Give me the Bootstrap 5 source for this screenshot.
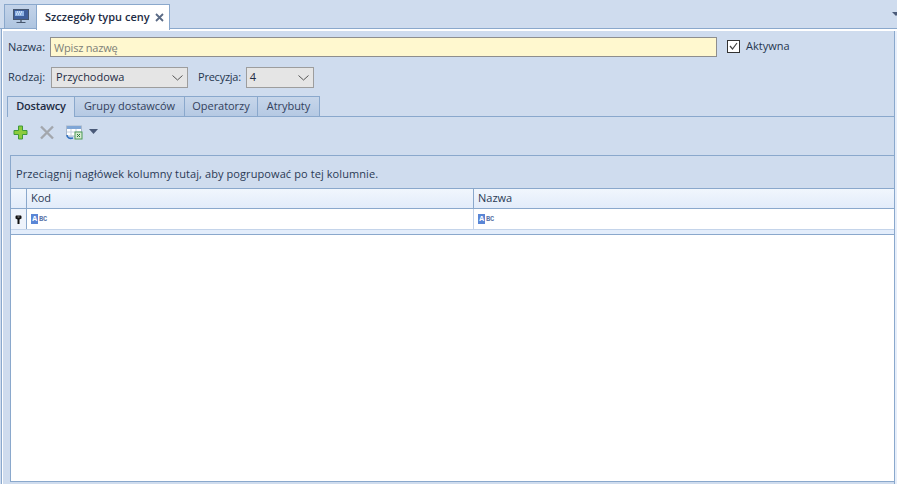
<!DOCTYPE html>
<html lang="pl"><head><meta charset="utf-8"><title>Szczegóły typu ceny</title>
<link href="https://cdn.jsdelivr.net/npm/bootstrap@5.3.0/dist/css/bootstrap.min.css" rel="stylesheet">
<style>
html,body{height:484px;overflow:hidden}
body{background:#cfdcee;font-family:"Open Sans","Noto Sans",sans-serif;font-size:11px;color:#26364f;width:897px}
.doc-strip{height:29px;padding-left:4px;border-bottom:1px solid #8aa8cc;align-items:flex-end;position:relative}
.doc-icon{width:33px;height:24px;background:linear-gradient(#c3d3e9,#afc5e0);border:1px solid #8aa8cc;border-bottom:0;justify-content:center;align-items:center;display:flex;flex:none}
.doc-active{width:134px;height:26px;background:#fff;border:1px solid #8aa8cc;border-bottom:0;margin-bottom:-2px;margin-left:-1px;padding:0 5px 0 8px;font-weight:600;font-size:11px;color:#1e2c44;position:relative;z-index:1;white-space:nowrap;flex:none}
.strip-arrow{position:absolute;right:-3px;top:12px;width:0;height:0;border-left:4px solid transparent;border-right:4px solid transparent;border-top:4px solid #4a5a78}
.frame{border-left:1px solid #8aa8cc;margin-left:1px;height:455px;position:relative;padding-left:0}
.frame-in{border-top:2px solid #fff;border-left:1px solid #fff;height:455px;padding:6px 0 0 5px}
.fld-label{color:#26364f;white-space:nowrap}
.name-input{width:667px;height:20px;border:1px solid #8e8e8e;background:#fff8cf;color:#7d7f78;font-size:11px;letter-spacing:-.2px;padding:0 3px;border-radius:0;margin-left:5px;line-height:18px}
.name-input::placeholder{color:#7d7f78;opacity:1}
.chk{width:13px;height:13px;border:1px solid #333;background:#fff;margin:0 6px 2px 10px;display:flex;align-items:center;justify-content:center}
.lbl-act{margin-bottom:2px}
.pick{height:21px;border:1px solid #9d9d9d;background:#e5e5e5;padding:0 4px;color:#1e2c44;font-size:11px;justify-content:space-between;align-items:center;display:flex}
.pick-a{width:137px;margin-left:6px}
.pick-b{width:68px;margin-left:5px;padding-left:3px}
.lbl-prec{margin-left:10px;letter-spacing:-.25px}
.row-two{margin-top:10px}
.sub-tabs{margin-top:8px;height:21px;margin-left:-1px;border-bottom:1px solid #8aa8cc;align-items:flex-end}
.sub-tab{height:20px;background:linear-gradient(#c7d6ea,#b5c9e3);border:1px solid #8aa8cc;border-bottom:0;border-left:0;padding-top:1px;text-align:center;letter-spacing:-.05px;color:#33415c}
.sub-on{height:21px;background:#cfdcee;border-left:1px solid #8aa8cc;font-weight:600;color:#1e2c44;margin-bottom:-1px;letter-spacing:-.2px;position:relative}
.tab-w1{width:68px}.tab-w2{width:110px}.tab-w3{width:73px}.tab-w4{width:62px}
.tools{height:30px;padding:1px 0 0 5px;gap:12px;align-items:center;margin-bottom:8px}
.gridbox{margin-left:2px;width:884px;border:1px solid #8aa8cc;border-right:0;border-bottom:0;height:327px;display:flex;flex-direction:column}
.group-hint{height:33px;padding:10px 0 0 5px;border-bottom:1px solid #8aa8cc;letter-spacing:.09px;color:#2a3a55}
.head-row{height:20px;background:linear-gradient(#f1f6fd,#e2ecfa);border-bottom:1px solid #8aa8cc}
.cell-ind{width:16px;border-right:1px solid #8aa8cc;flex:none}
.cell-a{width:447px;padding-left:4px;border-right:1px solid #8aa8cc;flex:none;line-height:18px;color:#2a3a55}
.cell-b{flex:1;padding-left:4px;line-height:18px;color:#2a3a55}
.data-row{height:21px;background:#fff;border-bottom:1px solid #c4d4ea}
.data-row .cell-a{border-right-color:#c4d4ea}
.data-row .cell-ind{background:#eef3fb}
.foot-strip{height:5px;background:#e3edfb;border-bottom:1px solid #8aa8cc}
.grid-body{flex:1;background:#fff;border-bottom:1px solid #8aa8cc}
.rightedge{position:absolute;left:892px;top:2px;width:3px;height:453px;background:#e6eefa;border-left:1px solid #8aa8cc}
.abc{font:700 7px/8px "Liberation Mono",monospace;color:#5a74a8;display:flex;align-items:center;height:100%;letter-spacing:-.2px}
.abc b{background:#5a86d6;color:#fff;width:7px;height:10px;line-height:10px;text-align:center;margin-right:1px;font-size:8px}
</style></head><body>
<div class="doc-strip d-flex">
  <div class="doc-icon"><svg width="16" height="15" viewBox="0 0 16 15"><rect x=".5" y=".5" width="15" height="10" fill="#3f5f9c" stroke="#46566e"/><rect x="2" y="2" width="9" height="5" fill="#8fb4e6"/><path d="M4 3h1M6 3h1M8 3h1M3 5h1M5 5h1M7 5h1" stroke="#fff"/><path d="M7 11h2v2H7z" fill="#6c7c92"/><path d="M3.500 13.500h9" stroke="#46566e"/></svg></div>
  <div class="doc-active d-flex align-items-center justify-content-between"><span>Szczegóły typu ceny</span><svg width="9" height="9" viewBox="0 0 9 9"><path d="M1 1l7 7M8 1L1 8" stroke="#5a6a85" stroke-width="1.800"/></svg></div>
  <div class="strip-arrow"></div>
</div>
<div class="frame"><div class="frame-in">
  <div class="d-flex align-items-center">
    <span class="fld-label">Nazwa:</span>
    <input class="form-control name-input" placeholder="Wpisz nazwę">
    <span class="chk"><svg width="9" height="8" viewBox="0 0 9 8"><path d="M1 4l2.500 3L8 1" fill="none" stroke="#444" stroke-width="1.200"/></svg></span>
    <span class="fld-label lbl-act">Aktywna</span>
  </div>
  <div class="d-flex align-items-center row-two">
    <span class="fld-label">Rodzaj:</span>
    <div class="pick pick-a"><span>Przychodowa</span><svg width="11" height="6" viewBox="0 0 11 6"><path d="M.5.500l5 4.500 5-4.500" fill="none" stroke="#555"/></svg></div>
    <span class="fld-label lbl-prec">Precyzja:</span>
    <div class="pick pick-b"><span>4</span><svg width="11" height="6" viewBox="0 0 11 6"><path d="M.5.500l5 4.500 5-4.500" fill="none" stroke="#555"/></svg></div>
  </div>
  <div class="sub-tabs d-flex">
    <div class="sub-tab sub-on tab-w1">Dostawcy</div>
    <div class="sub-tab tab-w2">Grupy dostawców</div>
    <div class="sub-tab tab-w3">Operatorzy</div>
    <div class="sub-tab tab-w4">Atrybuty</div>
  </div>
  <div class="tools d-flex">
    <svg width="15" height="15" viewBox="0 0 15 15"><path d="M5.500 1h4v4.500H14v4H9.500V14h-4V9.500H1v-4h4.500z" fill="#8ccc3c" stroke="#3f9a3a"/></svg>
    <svg width="14" height="15" viewBox="0 0 14 15"><path d="M1 1.500l12 12M13 1.500l-12 12" stroke="#a3a7ad" stroke-width="2.400"/></svg>
    <span class="d-flex align-items-start" style="gap:6px"><svg width="17" height="15" viewBox="0 0 17 15"><rect x=".5" y="1" width="15" height="10" fill="#fff" stroke="#a9b8cc"/><rect x="1" y="1" width="14" height="3" fill="#7fa6d6"/><path d="M1 7h14M5 4v7M10 4v7" stroke="#c5d1e0"/><rect x="9" y="7" width="7" height="7" fill="#d7ead2" stroke="#4d9a55"/><path d="M11 9l3 3M14 9l-3 3" stroke="#2d7a3c"/><path d="M1 10c0 3 3 4 6 3" fill="none" stroke="#2f6fc0" stroke-width="1.600"/></svg><svg width="9" height="5" viewBox="0 0 9 5" class="mt-1"><path d="M0 0h9L4.500 5z" fill="#4a5a78"/></svg></span>
  </div>
  <div class="gridbox">
    <div class="group-hint">Przeciągnij nagłówek kolumny tutaj, aby pogrupować po tej kolumnie.</div>
    <div class="head-row d-flex"><div class="cell-ind"></div><div class="cell-a">Kod</div><div class="cell-b">Nazwa</div></div>
    <div class="data-row d-flex"><div class="cell-ind d-flex align-items-center justify-content-center"><svg width="7" height="9" viewBox="0 0 7 9"><path d="M1 .5h5l.5 1v2l-2 1V9h-2V4.500l-2-1v-2z" fill="#111"/><path d="M2.500 2h2" stroke="#999"/></svg></div><div class="cell-a"><span class="abc"><b>A</b>BC</span></div><div class="cell-b"><span class="abc"><b>A</b>BC</span></div></div>
    <div class="foot-strip"></div>
    <div class="grid-body"></div>
  </div>
  <div class="rightedge"></div>
</div></div>
</body></html>
